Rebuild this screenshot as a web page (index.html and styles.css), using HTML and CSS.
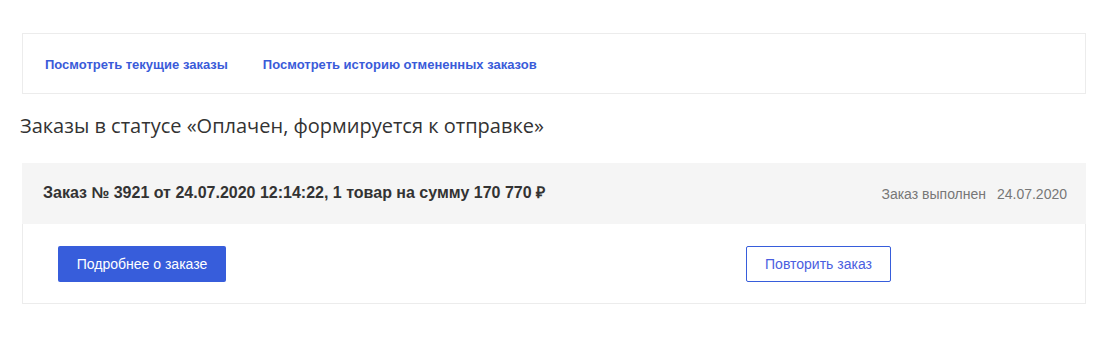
FILE: index.html
```html
<!DOCTYPE html>
<html>
<head>
  <meta charset="UTF-8">
  <title>Заказы</title>
  <link rel="stylesheet" href="styles.css">
</head>
<body>
  <div class="container">
    <div class="tabs">
      <a href="#" class="tab-link">Посмотреть текущие заказы</a>
      <a href="#" class="tab-link">Посмотреть историю отмененных заказов</a>
    </div>

    <h1 class="page-title">Заказы в статусе «Оплачен, формируется к отправке»</h1>

    <div class="order">
      <div class="order-head">
        <span class="order-title">Заказ № 3921 от 24.07.2020 12:14:22, 1 товар на сумму 170 770 ₽</span>
        <span class="order-status">Заказ выполнен <span class="order-date">24.07.2020</span></span>
      </div>
      <div class="order-body">
        <div class="order-col">
          <button class="btn btn-primary">Подробнее о заказе</button>
        </div>
        <div class="order-col">
          <button class="btn btn-outline">Повторить заказ</button>
        </div>
      </div>
    </div>
  </div>
</body>
</html>
```

FILE: styles.css
```css
body {
  font-family: "Liberation Sans", Arial, sans-serif;
  margin: 0;
  padding: 0;
  background-color: #fff;
  color: #333;
}

.container {
  padding: 33px 29px 0 22px;
}

.tabs {
  display: flex;
  gap: 35px;
  height: 59px;
  align-items: center;
  padding: 0 22px;
  border: 1px solid #ececec;
}

.tab-link {
  color: #3a5bd9;
  font-size: 13px;
  font-weight: bold;
  text-decoration: none;
  padding-top: 1px;
}

.page-title {
  font-family: "Open Sans", sans-serif;
  font-size: 20px;
  font-weight: normal;
  color: #333;
  margin: 16px 0 0 -2px;
  line-height: 32px;
}

.order {
  margin-top: 21px;
}

.order-head {
  display: flex;
  justify-content: space-between;
  align-items: center;
  height: 61px;
  padding: 0 19px 0 21px;
  background-color: #f5f5f5;
}

.order-title {
  font-size: 16px;
  font-weight: bold;
  color: #333;
  margin-top: -3px;
}

.order-status {
  font-size: 14px;
  color: #777;
  margin-top: 1px;
}

.order-date {
  margin-left: 7px;
}

.order-body {
  display: grid;
  grid-template-columns: 688px auto;
  padding: 22px 35px 21px;
  border: 1px solid #ececec;
  border-top: none;
}

.btn {
  height: 36px;
  border-radius: 2px;
  font-family: "Liberation Sans", Arial, sans-serif;
  font-size: 14px;
  cursor: pointer;
}

.btn-primary {
  width: 168px;
  background-color: #375ddb;
  color: #fff;
  border: none;
}

.btn-outline {
  width: 145px;
  background-color: #fff;
  color: #4a5ee0;
  border: 1px solid #375ddb;
}
```
